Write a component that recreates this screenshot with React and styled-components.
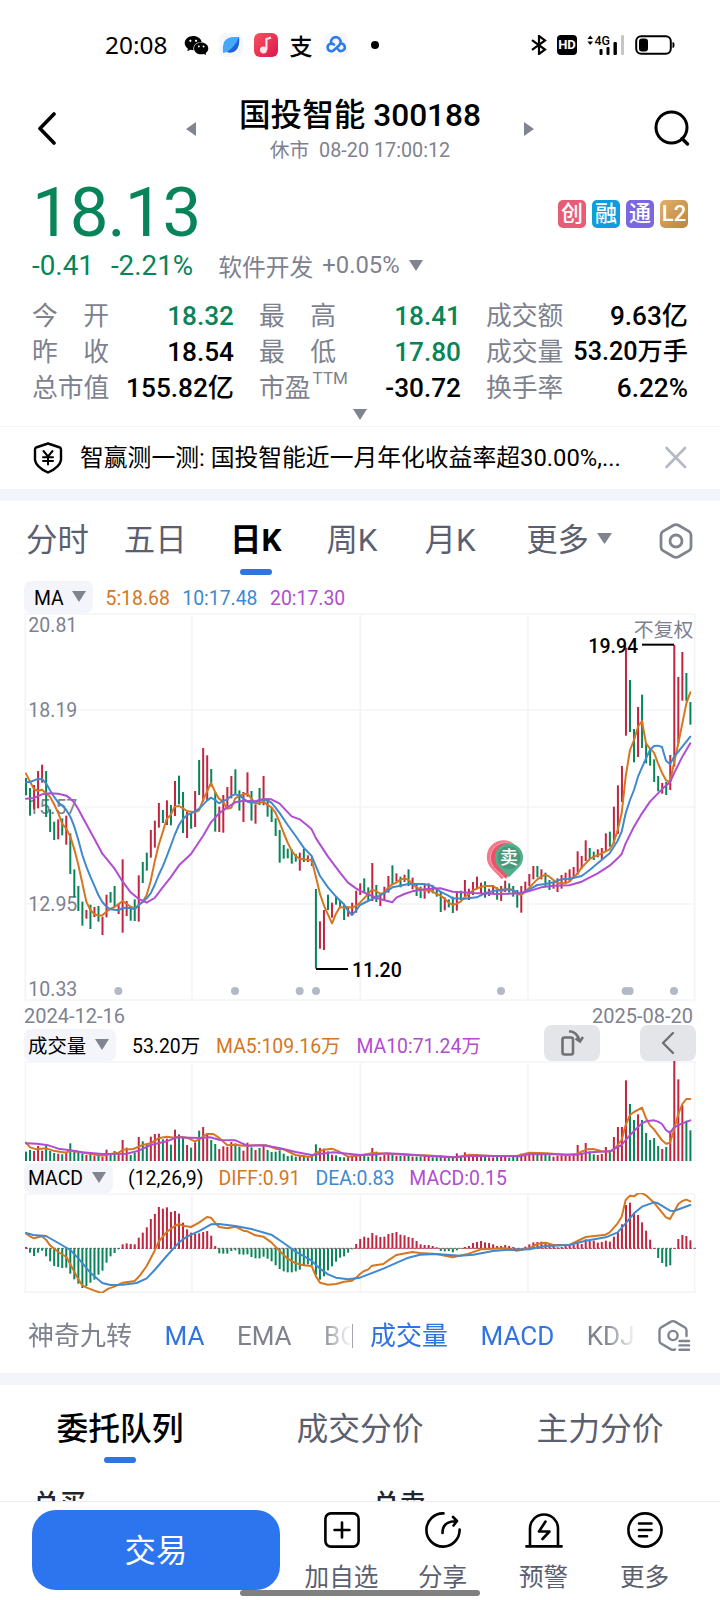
import React from 'react';
import styled, { createGlobalStyle, ThemeProvider } from 'styled-components';
import { AiFillWechat } from 'react-icons/ai';

const theme = {
  font: "Roboto, 'Noto Sans CJK SC', sans-serif",
  green: '#078558',
  red: '#c22540',
  blue: '#2f74df',
  orange: '#d6761f',
  sky: '#4089cf',
  purple: '#b04dd0',
  grey: '#7e828f',
  slate: '#5b6070',
  band: '#f4f5fa',
  line: '#f3f4f6',
};

const GlobalStyle = createGlobalStyle`
  body {
    margin: 0;
    background: #ffffff;
  }
  * {
    box-sizing: border-box;
  }
  svg {
    display: block;
    flex: none;
  }
`;

const Screen = styled.div`
  position: relative;
  display: flex;
  flex-direction: column;
  width: 720px;
  height: 1600px;
  overflow: hidden;
  background: #ffffff;
  color: #000000;
  font-family: ${props => props.theme.font};
  white-space: nowrap;
`;

/* status bar */

const StatusBar = styled.div`
  display: flex;
  align-items: center;
  justify-content: space-between;
  height: 90px;
  padding: 0 45px 0 105px;
`;

const StatusGroup = styled.div`
  display: flex;
  align-items: center;
  gap: ${props => props.gap}px;
`;

const Clock = styled.span`
  width: 68px;
  font-family: 'Noto Sans', sans-serif;
  font-size: 24.4px;
  line-height: 30px;
`;

const AppTile = styled.span`
  display: flex;
  align-items: center;
  justify-content: center;
  width: 24px;
  height: 24px;
  border-radius: 6px;
  background: ${props => props.bg || 'transparent'};
`;

const PayMark = styled.span`
  width: 24px;
  text-align: center;
  font-family: 'Noto Sans CJK SC', sans-serif;
  font-size: 23px;
  font-weight: 500;
  line-height: 24px;
`;

const StatusDot = styled.span`
  width: 8px;
  height: 8px;
  margin-left: 12px;
  border-radius: 50%;
  background: #000000;
`;

const HdBadge = styled.span`
  width: 20px;
  height: 20px;
  border-radius: 4px;
  background: #000000;
  color: #ffffff;
  font-size: 13px;
  font-weight: 700;
  line-height: 20px;
  text-align: center;
`;

/* header */

const Header = styled.div`
  display: flex;
  align-items: center;
  justify-content: space-between;
  height: 78px;
  padding: 0 29px 0 37px;
`;

const TitleGroup = styled.div`
  display: flex;
  align-items: center;
  justify-content: space-between;
  width: 348px;
  margin-left: 8px;
`;

const TitleText = styled.div`
  text-align: center;
`;

const StockTitle = styled.div`
  padding-top: 2px;
  font-size: 31.6px;
  font-weight: 500;
  line-height: 42px;
`;

const StockTime = styled.div`
  color: ${props => props.theme.grey};
  font-size: 19.8px;
  line-height: 28px;
`;

/* quote */

const Quote = styled.div`
  height: 259px;
  padding: 0 32px;
  border-bottom: 1px solid ${props => props.theme.line};
`;

const PriceRow = styled.div`
  display: flex;
  align-items: center;
  justify-content: space-between;
  height: 80px;
  padding-top: 10px;
`;

const Price = styled.div`
  color: ${props => props.theme.green};
  font-size: 69px;
  letter-spacing: -1px;
  line-height: 70px;
`;

const BadgeList = styled.div`
  display: flex;
  gap: 6px;
  padding-top: 2px;
`;

const Badge = styled.span`
  width: 28px;
  height: 28px;
  border-radius: 5px;
  background: ${props => props.bg};
  color: #ffffff;
  font-size: ${props => props.size || 22}px;
  font-weight: 500;
  line-height: 28px;
  text-align: center;
`;

const ChangeRow = styled.div`
  display: flex;
  align-items: center;
  height: 34px;
  color: ${props => props.theme.green};
  font-size: 27.8px;
`;

const ChangePct = styled.span`
  margin-left: 17px;
`;

const Sector = styled.span`
  display: flex;
  align-items: center;
  gap: 9px;
  margin-left: 25px;
  color: ${props => props.theme.grey};
  font-size: 23.8px;
`;

const StatGrid = styled.div`
  display: grid;
  grid-template-columns: repeat(3, 1fr);
  grid-auto-rows: 36px;
  column-gap: 25px;
  margin-top: 16px;
`;

const Stat = styled.div`
  display: flex;
  justify-content: space-between;
  align-items: center;
  height: 36px;
  font-size: 26px;
  line-height: 36px;
`;

const StatLabel = styled.span`
  display: flex;
  justify-content: space-between;
  min-width: 77px;
  color: ${props => props.theme.grey};
  font-size: 25.8px;
  sup {
    margin: -10px 0 0 2px;
    font-size: 17px;
    line-height: 36px;
  }
`;

const StatValue = styled.span`
  color: ${props => (props.down ? props.theme.green : '#000000')};
  font-size: ${props => (props.long ? 25.2 : 26.2)}px;
  font-weight: 500;
`;

const ExpandHandle = styled.div`
  display: flex;
  justify-content: center;
  padding-top: 3px;
`;

/* notice */

const Notice = styled.div`
  display: flex;
  align-items: center;
  height: 62px;
  padding: 0 32px 0 33px;
`;

const NoticeText = styled.span`
  flex: 1;
  margin-left: 17px;
  font-size: 23.8px;
  line-height: 36px;
`;

const Band = styled.div`
  flex: none;
  height: 12px;
  background: ${props => props.theme.band};
`;

/* period tabs */

const PeriodTabs = styled.div`
  display: flex;
  align-items: center;
  height: 80px;
  padding: 0 27px 0 26px;
`;

const PeriodTab = styled.div`
  display: flex;
  flex-direction: column;
  align-items: center;
  height: 80px;
  margin-right: ${props => props.space}px;
  padding-top: 18px;
  color: ${props => (props.active ? '#000000' : props.theme.slate)};
  font-size: 31.4px;
  font-weight: ${props => (props.active ? 700 : 400)};
  line-height: 44px;
`;

const Underline = styled.span`
  width: 32px;
  height: 6px;
  margin-top: ${props => props.top}px;
  border-radius: 3px;
  background: ${props => props.theme.blue};
`;

const MoreTab = styled.div`
  display: flex;
  align-items: center;
  gap: 8px;
  flex: 1;
  color: ${props => props.theme.slate};
  font-size: 31.4px;
  line-height: 44px;
  svg {
    margin-top: -5px;
  }
`;

/* charts */

const ChartArea = styled.div`
  padding: 0 24px;
`;

const Legend = styled.div`
  display: flex;
  align-items: flex-end;
  gap: ${props => props.gap}px;
  height: ${props => props.height}px;
  font-size: 19.4px;
  line-height: 28px;
`;

const LegendChip = styled.div`
  display: flex;
  align-items: flex-end;
  justify-content: space-between;
  width: ${props => props.width}px;
  height: ${props => props.height}px;
  padding: 0 7px 0 ${props => props.left || 4}px;
  border-radius: 7px;
  background: ${props => props.theme.band};
  svg {
    align-self: center;
    margin-top: -2px;
  }
`;

const LegendValue = styled.span`
  color: ${props => props.theme[props.tone] || '#000000'};
`;

const ChartButtons = styled.div`
  display: flex;
  gap: 40px;
  margin-left: auto;
`;

const ChartButton = styled.div`
  display: flex;
  align-items: center;
  justify-content: center;
  width: 56px;
  height: 36px;
  border-radius: 8px;
  background: #e4e5e9;
`;

const DateRow = styled.div`
  display: flex;
  justify-content: space-between;
  height: 24px;
  padding-right: 3px;
  color: ${props => props.theme.grey};
  font-size: 20px;
  line-height: 31px;
`;

/* indicator strip */

const IndicatorStrip = styled.div`
  display: flex;
  align-items: center;
  height: 80px;
  padding: 5px 29px 0 28px;
`;

const IndicatorList = styled.div`
  display: flex;
  gap: 32.5px;
  width: ${props => props.width}px;
  margin-left: ${props => props.left || 0}px;
  overflow: hidden;
  font-size: 26px;
  line-height: 36px;
  mask-image: linear-gradient(90deg, #000 ${props => props.width - 32}px, transparent 100%);
`;

const Indicator = styled.span`
  flex: none;
  color: ${props => (props.active ? props.theme.blue : props.theme.grey)};
`;

const StripDivider = styled.span`
  width: 1px;
  height: 24px;
  background: #a3a6ae;
`;

const StripSettings = styled.div`
  margin-left: auto;
`;

/* order queue */

const QueueTabs = styled.div`
  display: grid;
  grid-template-columns: repeat(3, 1fr);
  height: 95px;
`;

const QueueTab = styled.div`
  display: flex;
  flex-direction: column;
  align-items: center;
  padding-top: 21px;
  color: ${props => (props.active ? '#000000' : props.theme.slate)};
  font-size: 31.8px;
  font-weight: ${props => (props.active ? 500 : 400)};
  line-height: 46px;
`;

const QueueTotals = styled.div`
  display: grid;
  grid-template-columns: 340px 1fr;
  height: 21px;
  padding-left: 33px;
  overflow: hidden;
  color: #22252c;
  font-size: 26.4px;
  font-weight: 500;
  line-height: 38px;
  span {
    margin-top: 5px;
  }
`;

/* bottom bar */

const BottomBar = styled.div`
  display: flex;
  height: 99px;
  padding: 8px 25px 0 32px;
  border-top: 1px solid #ececf0;
`;

const TradeButton = styled.div`
  width: 248px;
  height: 80px;
  margin-right: 11px;
  border-radius: 24px;
  background: #2c75ee;
  color: #ffffff;
  font-size: 31.4px;
  line-height: 84px;
  text-align: center;
`;

const Action = styled.div`
  display: flex;
  flex-direction: column;
  align-items: center;
  flex: 1;
  padding-top: 2px;
  color: ${props => props.theme.slate};
  font-size: 24.6px;
  line-height: 36px;
  svg {
    margin-bottom: 12px;
  }
`;

const HomeIndicator = styled.div`
  position: absolute;
  left: 240px;
  bottom: 4px;
  width: 240px;
  height: 6px;
  border-radius: 3px;
  background: #808080;
`;

const Triangle = ({ width = 14, height = 11, dir = 'down' }) => {
  const points = {
    down: `0,0 ${width},0 ${width / 2},${height}`,
    left: `${width},0 ${width},${height} 0,${height / 2}`,
    right: `0,0 ${width},${height / 2} 0,${height}`,
  };
  return (
    <svg width={width} height={height}>
      <polygon points={points[dir]} fill="#80848f" />
    </svg>
  );
};

// one entry per trading day: direction, high, low (in chart units)
const candles = `G534,586 G564,647 R555,628 R513,625 R494,548 G513,651 G628,696 G665,720 R658,718 G655,706 R647,734 G700,822
G808,892 G858,933 G905,977 R930,956 G914,987 R921,951 G918,965 R950,1005 R884,952 G876,908 G858,922 R910,942 R778,998
R903,948 G918,962 G898,963 R826,965 G786,849 G758,812 R690,773 R662,743 R609,683 G630,669 R601,675 G615,676 R543,648
G527,613 G576,699 R635,714 G640,686 R573,681 G480,585 R444,605 R466,600 G507,560 G576,695 R620,696 R585,698 R561,618
R528,595 G508,585 G571,632 R576,666 R517,590 G573,662 R613,671 G564,615 R528,616 G596,650 G622,666 G655,708 G690,788
G735,776 G746,775 G748,791 G762,785 R758,812 G746,786 R766,786 G770,798 G867,1106 R964,1046 R930,1050 G884,930 R908,953
G888,914 G900,925 G915,960 R920,950 R908,942 R872,938 R850,885 G835,880 G862,900 R789,903 G855,906 R882,918 R860,902
R828,878 G796,852 R820,845 G830,862 R824,846 G808,858 R833,868 G855,888 G860,894 R855,896 R850,880 G856,880 G868,890
G875,936 R892,931 G898,922 G890,939 R874,932 G872,900 R840,890 R866,900 R846,885 R830,868 R848,880 G844,893 R866,888
R855,880 G862,899 R858,903 R842,876 G850,878 G858,890 G870,923 R858,938 R845,876 R822,858 R798,838 G798,832 R808,838
G818,858 G840,870 R848,866 R835,876 R825,866 R818,850 R808,846 R801,836 R754,824 R768,806 R721,783 G744,778 G755,780
R748,772 R744,778 R700,752 G695,740 R620,730 R556,702 R498,606 R143,407 G240,396 G387,487 R321,471 G284,444 G429,490
G445,497 G478,546 G528,574 R549,581 G546,585 R465,570 R135,500 R231,430 R156,302 G219,303 G306,374`
  .split(/\s+/)
  .map((item) => {
    const [high, low] = item.slice(1).split(',').map(Number);
    return { up: item[0] === 'R', high, low };
  });

const volumes = [
  455, 450, 453, 438, 452, 438, 453, 459, 461, 463, 455, 430, 450, 459, 461, 465, 460, 467, 464, 471, 449, 465, 453, 463,
  420, 443, 465, 458, 411, 424, 432, 410, 402, 401, 418, 416, 434, 389, 403, 414, 435, 443, 427, 392, 381, 402, 420, 432,
  447, 439, 441, 426, 430, 440, 452, 428, 442, 450, 444, 436, 450, 456, 455, 451, 461, 468, 466, 470, 468, 466, 472, 470,
  433, 444, 446, 454, 464, 466, 471, 472, 470, 470, 468, 462, 464, 470, 444, 455, 470, 465, 460, 460, 468, 468, 468, 463,
  470, 470, 470, 468, 468, 472, 472, 466, 472, 472, 473, 460, 470, 457, 464, 464, 462, 466, 465, 472, 472, 469, 471, 469,
  473, 471, 468, 461, 460, 456, 456, 460, 462, 464, 466, 470, 467, 466, 468, 468, 464, 435, 462, 429, 455, 463, 465, 462,
  441, 450, 411, 381, 381, 241, 312, 360, 343, 360, 399, 420, 414, 438, 447, 441, 392, 183, 238, 315, 362, 391,
];

const MACD_ZERO = 745;

const macd = [
  741, 757, 767, 757, 751, 768, 783, 797, 800, 803, 802, 820, 837, 850, 863, 857, 847, 838, 823, 811, 787, 768, 758, 747,
  733, 730, 732, 733, 713, 698, 682, 657, 642, 621, 626, 622, 636, 633, 641, 668, 688, 698, 701, 700, 696, 693, 707, 738,
  759, 760, 760, 752, 750, 762, 763, 762, 770, 774, 774, 769, 775, 783, 795, 806, 813, 816, 816, 813, 808, 797, 792, 795,
  824, 838, 828, 810, 798, 784, 772, 768, 757, 747, 732, 717, 710, 713, 699, 706, 711, 710, 702, 699, 696, 704, 706, 711,
  714, 723, 733, 735, 735, 738, 742, 752, 753, 752, 756, 750, 746, 741, 738, 729, 726, 723, 727, 729, 733, 738, 738, 735,
  738, 741, 744, 748, 740, 733, 727, 726, 725, 726, 731, 738, 742, 741, 738, 736, 734, 730, 732, 718, 722, 722, 728, 726,
  722, 725, 710, 697, 673, 615, 608, 640, 645, 667, 692, 719, 744, 773, 788, 799, 795, 744, 717, 705, 708, 721,
];

const lines = {
  ma5: '78,521 90,545 102,567 114,573 126,569 138,580 150,590 162,612 175,640 187,672 199,686 211,710 223,748 235,795 247,850 259,905 271,930 283,942 295,947 307,946 319,935 331,927 343,921 355,913 368,903 380,912 392,920 404,926 416,915 428,905 440,885 452,843 464,785 476,735 488,697 500,657 512,645 524,620 537,618 549,625 561,633 573,635 585,637 597,631 609,600 621,575 633,549 645,575 657,596 669,605 682,626 694,623 706,595 718,588 730,583 742,581 754,595 766,610 778,610 790,604 802,614 814,622 826,637 838,665 851,699 863,728 875,752 887,768 899,776 923,779 935,780 948,832 960,882 972,917 984,944 996,970 1008,941 1020,920 1032,924 1044,921 1056,923 1068,918 1080,908 1092,895 1104,882 1116,869 1128,873 1140,881 1152,879 1165,862 1177,853 1189,848 1201,839 1213,835 1225,839 1237,851 1249,862 1261,868 1273,872 1285,870 1297,874 1309,882 1321,886 1333,895 1345,907 1358,915 1370,911 1382,905 1394,892 1406,882 1418,872 1430,866 1443,861 1455,858 1479,858 1491,866 1503,875 1515,868 1527,867 1539,870 1551,880 1563,885 1576,875 1588,863 1600,850 1612,838 1624,830 1636,824 1648,830 1660,840 1672,850 1696,850 1708,845 1720,833 1733,820 1745,803 1757,790 1769,777 1781,770 1793,766 1805,760 1829,748 1841,728 1853,690 1865,640 1877,530 1890,450 1902,420 1914,380 1926,363 1938,430 1950,446 1962,458 1974,490 1986,518 1998,541 2010,546 2022,490 2035,430 2047,370 2059,310 2071,277',
  ma10: '78,546 90,546 102,541 114,537 126,537 138,550 150,571 162,590 175,608 187,617 199,630 211,650 223,680 235,720 247,765 259,800 271,830 283,857 295,885 307,906 319,920 331,928 355,931 368,924 392,924 404,928 416,915 428,906 440,895 452,880 464,855 476,825 488,800 500,770 512,738 524,705 537,675 549,657 561,645 573,640 597,627 609,614 621,602 633,593 645,600 657,610 669,603 682,598 694,587 706,583 718,587 730,595 742,605 754,608 766,607 778,601 790,599 802,601 814,608 826,622 838,638 863,675 887,708 911,743 935,768 948,800 960,828 984,862 1008,890 1032,913 1044,932 1056,945 1068,932 1080,915 1104,903 1128,892 1152,880 1177,862 1201,857 1225,852 1273,852 1297,858 1321,875 1345,887 1358,895 1394,896 1430,892 1455,880 1479,873 1515,868 1539,870 1551,877 1563,880 1588,868 1612,855 1636,852 1660,847 1684,838 1708,836 1745,828 1769,810 1793,790 1829,760 1853,722 1865,695 1877,640 1890,600 1902,570 1914,530 1938,475 1950,450 1962,438 1974,437 1986,441 1998,482 2010,492 2022,471 2035,455 2071,410',
  ma20: '78,596 102,594 126,583 150,580 175,581 199,587 211,596 223,608 235,628 247,650 283,716 307,761 343,805 368,845 392,877 416,897 440,908 464,894 488,862 512,832 537,796 573,762 609,708 633,667 657,640 682,622 706,607 730,602 766,604 790,597 814,598 838,610 875,649 899,658 923,677 935,688 948,715 984,770 1020,818 1044,848 1068,865 1080,872 1116,888 1140,897 1177,907 1189,893 1213,882 1237,874 1273,868 1321,865 1358,875 1418,879 1490,882 1563,880 1588,873 1624,862 1660,857 1708,856 1745,845 1793,820 1829,797 1853,775 1865,762 1877,730 1902,680 1926,640 1950,605 1974,580 1998,556 2010,547 2022,520 2047,470 2071,430',
  vol5: '78,428 90,442 110,448 138,445 160,452 199,458 211,452 240,457 270,461 307,467 343,460 356,458 370,449 400,447 425,436 452,430 475,415 500,410 524,413 540,410 560,413 585,424 600,417 620,402 640,402 655,412 682,436 706,434 730,437 766,436 800,436 830,447 850,448 887,465 923,470 935,470 948,459 972,449 996,446 1020,456 1044,470 1080,466 1120,459 1177,462 1220,465 1273,466 1320,469 1370,472 1410,464 1480,468 1550,468 1588,458 1640,460 1700,465 1730,462 1760,448 1780,447 1805,454 1829,455 1841,450 1865,420 1877,375 1890,345 1902,336 1926,323 1938,355 1950,376 1962,388 1986,421 1998,431 2010,428 2022,390 2035,342 2047,312 2059,297 2071,297',
  vol10: '78,430 110,431 145,436 175,446 211,451 247,457 307,462 380,461 416,452 452,435 500,424 530,412 570,413 600,414 630,412 660,420 706,421 742,437 790,436 838,444 887,456 935,465 1000,457 1080,465 1120,464 1160,460 1220,463 1280,468 1358,472 1420,467 1560,469 1588,463 1660,463 1730,464 1770,457 1829,454 1865,435 1877,420 1902,393 1926,370 1938,364 1962,361 1974,365 1986,372 1998,390 2010,399 2022,382 2047,370 2071,361',
  diff: '78,700 90,709 102,715 126,709 138,719 150,736 175,756 199,771 211,793 235,838 247,856 260,863 283,872 305,879 325,866 343,860 368,848 404,843 420,826 440,798 464,752 476,725 500,696 524,678 537,672 549,677 573,681 597,668 621,651 633,653 645,668 657,681 682,685 706,680 730,692 742,694 766,706 790,710 814,727 838,752 863,776 887,790 911,796 935,798 948,830 960,848 984,854 1008,852 1032,845 1056,842 1068,834 1080,822 1092,813 1104,809 1116,797 1150,792 1165,781 1189,765 1237,756 1260,759 1309,762 1358,772 1400,763 1443,748 1515,745 1551,752 1588,745 1612,732 1636,728 1660,735 1708,735 1757,711 1817,704 1829,697 1853,670 1865,650 1877,600 1890,587 1902,589 1914,580 1926,580 1938,586 1962,608 1974,623 1998,652 2010,657 2022,636 2035,612 2047,603 2059,599 2071,604',
  dea: '78,699 100,705 138,708 175,729 211,750 235,775 271,818 307,849 331,855 368,854 410,849 440,835 464,810 500,768 537,727 561,710 600,692 633,673 657,672 706,678 754,687 814,704 851,729 887,755 935,782 960,806 984,823 1008,833 1044,838 1080,833 1150,806 1225,773 1260,764 1309,762 1380,767 1420,764 1479,753 1515,750 1588,748 1636,738 1708,735 1757,722 1817,712 1853,697 1877,670 1902,640 1926,620 1962,607 1974,610 2010,632 2022,633 2071,615',
};

const events = [355, 705, 899, 948, 1503, 1877, 1889, 2022];
const columns = [76, 576, 1081, 1584, 2084];

const barX = i => 78 + i * 12.08;
const barColor = up => (up ? theme.red : theme.green);

const Line = ({ points, color }) => (
  <polyline points={points} fill="none" stroke={color} strokeWidth="6" strokeLinejoin="round" strokeLinecap="round" />
);

const Grid = ({ rows }) => (
  <g stroke={theme.line} strokeWidth="5">
    {columns.map(x => <line key={x} x1={x} x2={x} y1={rows[0]} y2={rows[rows.length - 1]} />)}
    {rows.map(y => <line key={y} x1="74" x2="2086" y1={y} y2={y} />)}
  </g>
);

const PriceChart = () => (
  <svg width="672" height="388" viewBox="72 39 2016 1164" fontFamily={theme.font} fontSize="58.5">
    <Grid rows={[42, 330, 621, 912, 1200]} />
    <g fill={theme.grey}>
      <text x="85" y="96">20.81</text>
      <text x="85" y="350">18.19</text>
      <text x="85" y="642">15.57</text>
      <text x="85" y="932">12.95</text>
      <text x="85" y="1187">10.33</text>
      <text x="2080" y="112" fontSize="59.5" textAnchor="end">不复权</text>
    </g>
    {candles.map((c, i) => (
      <rect key={i} x={barX(i) - 3} y={c.high} width="6" height={c.low - c.high} fill={barColor(c.up)} />
    ))}
    <Line points={lines.ma5} color={theme.orange} />
    <Line points={lines.ma10} color={theme.sky} />
    <Line points={lines.ma20} color={theme.purple} />
    <g stroke="#000000" strokeWidth="6">
      <line x1="948" x2="1044" y1="1107" y2="1107" />
      <line x1="1926" x2="2022" y1="134" y2="134" />
    </g>
    <g fontWeight="500">
      <text x="1056" y="1131">11.20</text>
      <text x="1765" y="159">19.94</text>
    </g>
    {events.map(x => <circle key={x} cx={x} cy="1173" r="12" fill="#b4b9c6" />)}
    <path d="M1505 838 L1473 804 A50 50 0 1 1 1551 800 Z" fill="#f4798a" />
    <path d="M1517 836 L1481 802 A46 46 0 1 1 1553 802 Z" fill="#e9546b" stroke="#f7a5b0" strokeWidth="3" />
    <path d="M1527 832 L1497 802 A42 42 0 1 1 1557 802 Z" fill="#4fb08c" />
    <circle cx="1527" cy="773" r="34" fill="#4d9779" />
    <text x="1527" y="793" fontSize="54" fontWeight="500" fill="#ffffff" textAnchor="middle">卖</text>
  </svg>
);

const VolumeChart = () => (
  <svg width="672" height="100" viewBox="72 183 2016 300">
    <Grid rows={[186, 483]} />
    {volumes.map((y, i) => (
      <rect key={i} x={barX(i) - 3} y={y} width="6" height={483 - y} fill={barColor(candles[i].up)} />
    ))}
    <Line points={lines.vol5} color={theme.orange} />
    <Line points={lines.vol10} color={theme.purple} />
  </svg>
);

const MacdChart = () => (
  <svg width="672" height="100" viewBox="72 579 2016 300">
    <Grid rows={[582, 877]} />
    <line x1="76" x2="2088" y1={MACD_ZERO} y2={MACD_ZERO} stroke="#a8465c" strokeWidth="3" strokeDasharray="8 4" />
    {macd.map((y, i) => (
      <rect
        key={i}
        x={barX(i) - 3}
        y={Math.min(y, MACD_ZERO)}
        width="6"
        height={Math.abs(y - MACD_ZERO) + 1}
        fill={barColor(y < MACD_ZERO)}
      />
    ))}
    <Line points={lines.diff} color={theme.orange} />
    <Line points={lines.dea} color={theme.sky} />
  </svg>
);

const stats = [
  { label: ['今', '开'], value: '18.32', down: true },
  { label: ['最', '高'], value: '18.41', down: true },
  { label: ['成交额'], value: '9.63亿' },
  { label: ['昨', '收'], value: '18.54' },
  { label: ['最', '低'], value: '17.80', down: true },
  { label: ['成交量'], value: '53.20万手', long: true },
  { label: ['总市值'], value: '155.82亿' },
  { label: ['市盈'], sup: 'TTM', value: '-30.72' },
  { label: ['换手率'], value: '6.22%' },
];

const badges = [
  { text: '创', bg: '#e85d76' },
  { text: '融', bg: '#109ddd' },
  { text: '通', bg: '#7b68e0' },
  { text: 'L2', bg: 'linear-gradient(135deg, #e3b068, #b98440)', size: 22 },
];

const App = () => (
  <ThemeProvider theme={theme}>
    <GlobalStyle />
    <Screen>
      <StatusBar>
        <StatusGroup gap={11}>
          <Clock>20:08</Clock>
          <AppTile><AiFillWechat size={27} /></AppTile>
          <AppTile bg="#f5f7fb">
            <svg width="18" height="18" viewBox="0 0 18 18">
              <path d="M1 17 Q0 11 2 6 Q5 1 12 1 L17 1 Q18 8 15 13 Q11 18 5 16 Z" fill="#46a8fb" />
              <path d="M17 1 Q18 8 15 13 Q11 18 5 16 Q13 11 17 1 Z" fill="#2160d8" />
            </svg>
          </AppTile>
          <AppTile bg="linear-gradient(135deg, #f6525f, #dc174c)">
            <svg width="14" height="18" viewBox="0 0 14 18" fill="none" stroke="#ffe3e6" strokeWidth="2.2">
              <circle cx="4.4" cy="14" r="2.4" fill="#ffe3e6" />
              <path d="M7.4 14 V3 L12 1.6" />
            </svg>
          </AppTile>
          <PayMark>支</PayMark>
          <AppTile bg="#f5f8fc">
            <svg width="20" height="18" viewBox="0 0 20 18" fill="none" stroke="#2f7bea" strokeWidth="2.6" strokeLinecap="round">
              <path d="M5.2 7.2 A4.8 4.8 0 1 1 13.5 9 L8.5 13.6 A3.8 3.8 0 1 1 8 8.6 M11.8 13 A3.7 3.7 0 1 0 14 7.7" />
            </svg>
          </AppTile>
          <StatusDot />
        </StatusGroup>
        <StatusGroup gap={10}>
          <svg width="16" height="20" viewBox="0 0 16 20" fill="none" stroke="#000" strokeWidth="2.2">
            <path d="M1 5.2 L14 14.6 L8 19 V1 L14 5.4 L1 14.8" />
          </svg>
          <HdBadge>HD</HdBadge>
          <svg width="38" height="22" viewBox="0 0 38 22">
            <path d="M0.5 5 L3.2 1.6 L6 5 Z M0.5 7.5 L3.2 11 L6 7.5 Z" />
            <text x="7.5" y="11" fontFamily="Roboto" fontSize="13.5" fontWeight="500" textLength="15.5" lengthAdjust="spacingAndGlyphs">4G</text>
            <rect x="12.5" y="15" width="3" height="6" rx="1" />
            <rect x="19.5" y="13" width="3" height="8" rx="1" />
            <rect x="26.5" y="8" width="3.4" height="13" rx="1" />
            <rect x="34" y="1" width="3" height="20" rx="1" fill="#c6c6c6" />
          </svg>
          <svg width="40" height="20" viewBox="0 0 40 20">
            <rect x="1.2" y="1.2" width="34.6" height="17.6" rx="5" fill="none" stroke="#000" strokeWidth="2" />
            <rect x="4" y="3.5" width="9" height="13" rx="3" />
            <path d="M37.5 7 Q39.5 7 39.5 10 Q39.5 13 37.5 13 Z" />
          </svg>
        </StatusGroup>
      </StatusBar>

      <Header>
        <svg width="22" height="34" viewBox="0 0 22 34" fill="none" stroke="#000" strokeWidth="3.6" strokeLinecap="round" strokeLinejoin="round">
          <path d="M17 2 L3 16.5 L17 31" />
        </svg>
        <TitleGroup>
          <Triangle width={10} height={14} dir="left" />
          <TitleText>
            <StockTitle>国投智能 300188</StockTitle>
            <StockTime>休市&nbsp; 08-20 17:00:12</StockTime>
          </TitleText>
          <Triangle width={10} height={14} dir="right" />
        </TitleGroup>
        <svg width="38" height="38" viewBox="0 0 38 38" fill="none" stroke="#000" strokeWidth="3" strokeLinecap="round">
          <circle cx="18.5" cy="17.5" r="15.5" />
          <path d="M29 28.5 L34.5 34" strokeWidth="3.4" />
        </svg>
      </Header>

      <Quote>
        <PriceRow>
          <Price>18.13</Price>
          <BadgeList>
            {badges.map(b => <Badge key={b.text} bg={b.bg} size={b.size}>{b.text}</Badge>)}
          </BadgeList>
        </PriceRow>
        <ChangeRow>
          <span>-0.41</span>
          <ChangePct>-2.21%</ChangePct>
          <Sector>
            <span>软件开发</span>
            <span>+0.05%</span>
            <Triangle />
          </Sector>
        </ChangeRow>
        <StatGrid>
          {stats.map(s => (
            <Stat key={s.value}>
              <StatLabel>
                {s.label.map(part => <span key={part}>{part}</span>)}
                {s.sup && <sup>{s.sup}</sup>}
              </StatLabel>
              <StatValue down={s.down} long={s.long}>{s.value}</StatValue>
            </Stat>
          ))}
        </StatGrid>
        <ExpandHandle><Triangle /></ExpandHandle>
      </Quote>

      <Notice>
        <svg width="30" height="32" viewBox="0 0 30 32" fill="none" stroke="#000" strokeWidth="2.4" strokeLinejoin="round" strokeLinecap="round">
          <path d="M15 1.5 L27 5.5 Q28 6 28 7.5 V18 Q27 25 15 30.5 Q3 25 2 18 V7.5 Q2 6 3 5.5 Z" />
          <path d="M10.5 9 L15 14.5 L19.5 9 M15 14.5 V22.5 M10 15.2 H20 M10 19 H20" strokeWidth="2" />
        </svg>
        <NoticeText>智赢测一测: 国投智能近一月年化收益率超30.00%,...</NoticeText>
        <svg width="24" height="24" viewBox="0 0 24 24" stroke="#b3bac6" strokeWidth="2.6" strokeLinecap="round">
          <path d="M2.5 2 L21 21 M21 2 L2.5 21" />
        </svg>
      </Notice>
      <Band />

      <PeriodTabs>
        <PeriodTab space={35}>分时</PeriodTab>
        <PeriodTab space={43.5}>五日</PeriodTab>
        <PeriodTab space={45} active>
          日K
          <Underline top={6} />
        </PeriodTab>
        <PeriodTab space={47}>周K</PeriodTab>
        <PeriodTab space={50.5}>月K</PeriodTab>
        <MoreTab>更多 <Triangle width={15} height={11} /></MoreTab>
        <svg width="34" height="36" viewBox="0 0 34 36" fill="none" stroke="#80848f" strokeWidth="2.8" strokeLinejoin="round">
          <path d="M14.5 2.2 Q17 1 19.5 2.2 L30 8.4 Q32 9.6 32 12 V24 Q32 26.4 30 27.6 L19.5 33.8 Q17 35 14.5 33.8 L4 27.6 Q2 26.4 2 24 V12 Q2 9.6 4 8.4 Z" />
          <circle cx="17" cy="18" r="6" />
        </svg>
      </PeriodTabs>

      <ChartArea>
        <Legend gap={12.5} height={32}>
          <LegendChip width={69} height={32} left={10}>MA <Triangle /></LegendChip>
          <LegendValue tone="orange">5:18.68</LegendValue>
          <LegendValue tone="sky">10:17.48</LegendValue>
          <LegendValue tone="purple">20:17.30</LegendValue>
        </Legend>
        <PriceChart />
        <DateRow>
          <span>2024-12-16</span>
          <span>2025-08-20</span>
        </DateRow>
        <Legend gap={16} height={36}>
          <LegendChip width={92} height={32}>成交量 <Triangle /></LegendChip>
          <LegendValue>53.20万</LegendValue>
          <LegendValue tone="orange">MA5:109.16万</LegendValue>
          <LegendValue tone="purple">MA10:71.24万</LegendValue>
          <ChartButtons>
            <ChartButton>
              <svg width="24" height="28" viewBox="0 0 24 28" fill="none" stroke="#6f7074" strokeWidth="2.6">
                <rect x="2.5" y="8.5" width="10.5" height="17" rx="2" />
                <path d="M9 2.2 Q17 2.5 19.5 11.5 M15.5 9.5 L20 12.5 L23 8" />
              </svg>
            </ChartButton>
            <ChartButton>
              <svg width="14" height="24" viewBox="0 0 14 24" fill="none" stroke="#6f7074" strokeWidth="2.4" strokeLinecap="round" strokeLinejoin="round">
                <path d="M12 2 L2 12 L12 22" />
              </svg>
            </ChartButton>
          </ChartButtons>
        </Legend>
        <VolumeChart />
        <Legend gap={15} height={32}>
          <LegendChip width={89} height={30}>MACD <Triangle /></LegendChip>
          <LegendValue>(12,26,9)</LegendValue>
          <LegendValue tone="orange">DIFF:0.91</LegendValue>
          <LegendValue tone="sky">DEA:0.83</LegendValue>
          <LegendValue tone="purple">MACD:0.15</LegendValue>
        </Legend>
        <MacdChart />
      </ChartArea>

      <IndicatorStrip>
        <IndicatorList width={324}>
          <Indicator>神奇九转</Indicator>
          <Indicator active>MA</Indicator>
          <Indicator>EMA</Indicator>
          <Indicator>BOLL</Indicator>
        </IndicatorList>
        <StripDivider />
        <IndicatorList width={267} left={17}>
          <Indicator active>成交量</Indicator>
          <Indicator active>MACD</Indicator>
          <Indicator>KDJ</Indicator>
        </IndicatorList>
        <StripSettings>
          <svg width="34" height="34" viewBox="0 0 34 34" fill="none" stroke="#80848f" strokeWidth="2.4" strokeLinecap="round">
            <path d="M29.5 17 V11.5 Q29.5 9.5 28 8.5 L18 2.6 Q16 1.6 14 2.6 L4 8.5 Q2.5 9.5 2.5 11.5 V21.5 Q2.5 23.5 4 24.5 L14 30.4 Q16 31.4 18 30.4" />
            <circle cx="16" cy="16.5" r="4.6" />
            <path d="M22.5 22 H32 M22.5 26.4 H32 M22.5 30.8 H32" />
          </svg>
        </StripSettings>
      </IndicatorStrip>
      <Band />

      <QueueTabs>
        <QueueTab active>
          委托队列
          <Underline top={5} />
        </QueueTab>
        <QueueTab>成交分价</QueueTab>
        <QueueTab>主力分价</QueueTab>
      </QueueTabs>
      <QueueTotals>
        <span>总买</span>
        <span>总卖</span>
      </QueueTotals>

      <BottomBar>
        <TradeButton>交易</TradeButton>
        <Action>
          <svg width="36" height="36" viewBox="0 0 36 36" fill="none" stroke="#000" strokeWidth="2.6" strokeLinecap="round">
            <rect x="1.4" y="1.4" width="33.2" height="33.2" rx="5.5" />
            <path d="M18 10.5 V25.5 M10.5 18 H25.5" />
          </svg>
          加自选
        </Action>
        <Action>
          <svg width="36" height="36" viewBox="0 0 36 36" fill="none" stroke="#000" strokeWidth="2.6" strokeLinecap="round" strokeLinejoin="round">
            <path d="M18.5 1.4 A16.6 16.6 0 1 0 34.6 17.5" />
            <path d="M17.5 21 Q17.5 9.5 30 9.2 M28 5 L32 9 L28.5 13.5" />
          </svg>
          分享
        </Action>
        <Action>
          <svg width="38" height="36" viewBox="0 0 38 36" fill="none" stroke="#000" strokeWidth="2.6" strokeLinecap="round" strokeLinejoin="round">
            <path d="M5 34 V16.5 A14 14 0 0 1 33 16.5 V34 M1.4 34.4 H36.6" />
            <path d="M20.5 9.5 L14 19.5 H24.5 L17.5 27" />
          </svg>
          预警
        </Action>
        <Action>
          <svg width="36" height="36" viewBox="0 0 36 36" fill="none" stroke="#000" strokeWidth="2.6" strokeLinecap="round">
            <circle cx="18" cy="18" r="16.6" />
            <path d="M12 11.5 H24.5 M12 18 H24.5 M12 24.2 H20" />
          </svg>
          更多
        </Action>
      </BottomBar>
      <HomeIndicator />
    </Screen>
  </ThemeProvider>
);

export default App;
